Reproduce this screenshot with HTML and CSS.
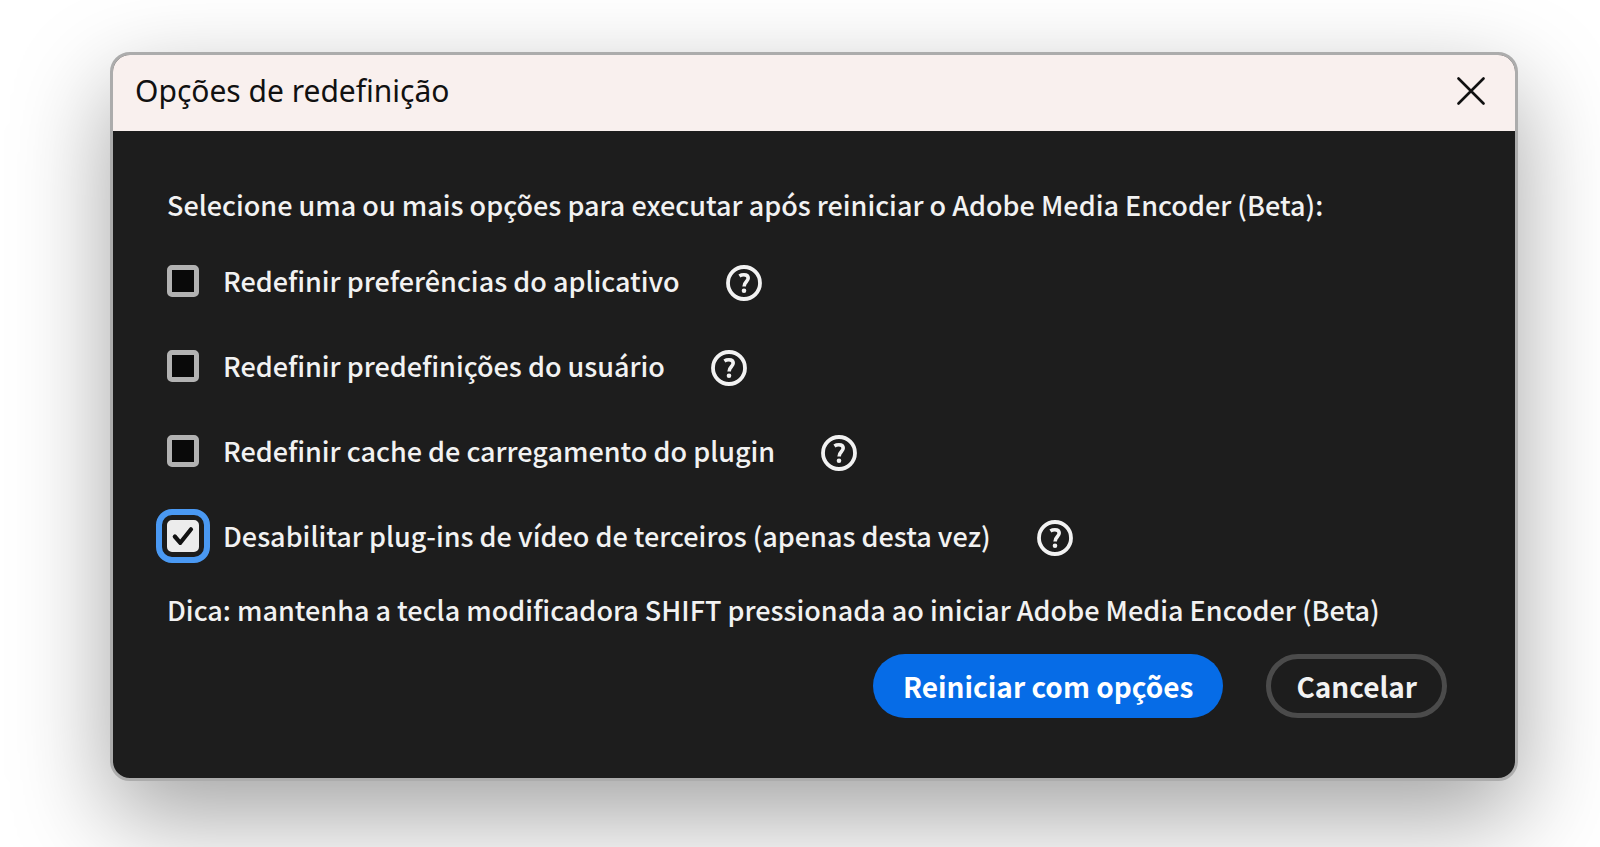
FILE: index.html
```html
<!DOCTYPE html>
<html lang="pt-BR">
  <head>
    <meta charset="UTF-8" />
    <meta name="viewport" content="width=device-width, initial-scale=1.0" />
    <title>Opções de redefinição</title>

    <link rel="stylesheet" href="styles.css">
  </head>
  <body>
    <svg hidden>
      <symbol id="icon-help" viewBox="0 0 36 36">
        <circle cx="18" cy="18" r="16" fill="none" stroke="currentColor" stroke-width="3.8" />
        <path d="M13.4 10.9C14.8 10 16.4 9.7 17.9 9.7C20.6 9.7 22.2 11 22.2 13.1C22.2 16.6 18.1 17.2 18.1 21.4" fill="none" stroke="currentColor" stroke-width="3.6" />
        <circle cx="18" cy="25.8" r="2.3" fill="currentColor" />
      </symbol>
    </svg>

    <main class="dialog" role="dialog" aria-labelledby="title">
      <header class="titlebar">
        <h1 id="title">Opções de redefinição</h1>
        <button class="close" type="button" aria-label="Fechar">
          <svg viewBox="0 0 28 28" width="28" height="28">
            <path d="M1.5 1.5L26.5 26.5M26.5 1.5L1.5 26.5" stroke="currentColor" stroke-width="2.6" stroke-linecap="round" />
          </svg>
        </button>
      </header>

      <form class="content">
        <p class="intro">Selecione uma ou mais opções para executar após reiniciar o Adobe Media Encoder (Beta):</p>

        <div class="options">
          <div class="option">
            <input type="checkbox" id="preferences" />
            <label for="preferences">Redefinir preferências do aplicativo</label>
            <button class="help" type="button" aria-label="Ajuda"><svg><use href="#icon-help" /></svg></button>
          </div>
          <div class="option">
            <input type="checkbox" id="presets" />
            <label for="presets">Redefinir predefinições do usuário</label>
            <button class="help" type="button" aria-label="Ajuda"><svg><use href="#icon-help" /></svg></button>
          </div>
          <div class="option">
            <input type="checkbox" id="cache" />
            <label for="cache">Redefinir cache de carregamento do plugin</label>
            <button class="help" type="button" aria-label="Ajuda"><svg><use href="#icon-help" /></svg></button>
          </div>
          <div class="option">
            <span class="check">
              <input type="checkbox" id="plugins" class="focused" checked />
              <svg class="tick" viewBox="0 0 32 32">
                <path d="M7.8 16.5L13.3 22.8L24 9.3" fill="none" stroke="currentColor" stroke-width="4.2" stroke-linecap="round" stroke-linejoin="round" />
              </svg>
            </span>
            <label for="plugins">Desabilitar plug-ins de vídeo de terceiros (apenas desta vez)</label>
            <button class="help" type="button" aria-label="Ajuda"><svg><use href="#icon-help" /></svg></button>
          </div>
        </div>

        <p class="tip">Dica: mantenha a tecla modificadora SHIFT pressionada ao iniciar Adobe Media Encoder (Beta)</p>

        <div class="actions">
          <button class="primary" type="submit">Reiniciar com opções</button>
          <button class="secondary" type="button">Cancelar</button>
        </div>
      </form>
    </main>
  </body>
</html>
```

FILE: styles.css
```css
* {
  box-sizing: border-box;
}

html {
  background: #ffffff;
}

body {
  min-height: 100vh;
  margin: 0;
  padding: 52px 82px 64px 110px;
  overflow-x: hidden;
  font-family: "Noto Sans CJK SC", "Noto Sans", sans-serif;
  font-size: 27px;
  font-weight: 500;
  line-height: 36px;
}

h1,
p {
  margin: 0;
}

button {
  font: inherit;
  color: inherit;
  background: none;
  border: 0;
  padding: 0;
  cursor: pointer;
}

svg {
  display: block;
}

svg[hidden] {
  display: none;
}

.dialog {
  border: 3px solid #acacac;
  border-radius: 20px;
  background: #1d1d1d;
  box-shadow: 0 36px 96px rgba(0, 0, 0, 0.36);
  overflow: hidden;
}

/* title bar */
.titlebar {
  display: flex;
  align-items: center;
  justify-content: space-between;
  min-height: 76px;
  padding: 0 30px 4px 22px;
  color: #111111;
  background: #f9f0ee;
}

.titlebar h1 {
  font-family: "Noto Sans", sans-serif;
  font-size: 30px;
  font-weight: 400;
}

/* content */
.content {
  padding: 56px 68px 60px 54px;
  color: #f2f2f2;
}

.options {
  display: grid;
  gap: 45px;
  margin: 38px 0 36px;
}

.option {
  display: flex;
  align-items: center;
  min-height: 40px;
}

.option label {
  margin: 0 46px 0 24px;
}

.check {
  position: relative;
}

input[type="checkbox"] {
  appearance: none;
  display: block;
  flex: none;
  width: 32px;
  height: 32px;
  margin: 0;
  border: 5px solid #b2b2b2;
  border-radius: 5px;
  background: #090909;
}

input[type="checkbox"]:checked {
  border-color: #ececec;
  background: #ececec;
}

input[type="checkbox"].focused {
  outline: 6px solid #4a99f3;
  outline-offset: 5px;
}

.tick {
  position: absolute;
  inset: 0;
  color: #111111;
  pointer-events: none;
}

.help {
  margin-top: 4px;
}

.help svg {
  width: 36px;
  height: 36px;
}

/* buttons */
.actions {
  display: flex;
  justify-content: flex-end;
  gap: 43px;
  margin-top: 26px;
}

.primary,
.secondary {
  height: 64px;
  padding: 0 30px;
  border-radius: 32px;
  font-size: 28px;
  font-weight: 700;
}

.primary {
  color: #ffffff;
  background: #066ce7;
}

.secondary {
  padding: 0 25px;
  border: 5px solid #4b4b4b;
}
```
